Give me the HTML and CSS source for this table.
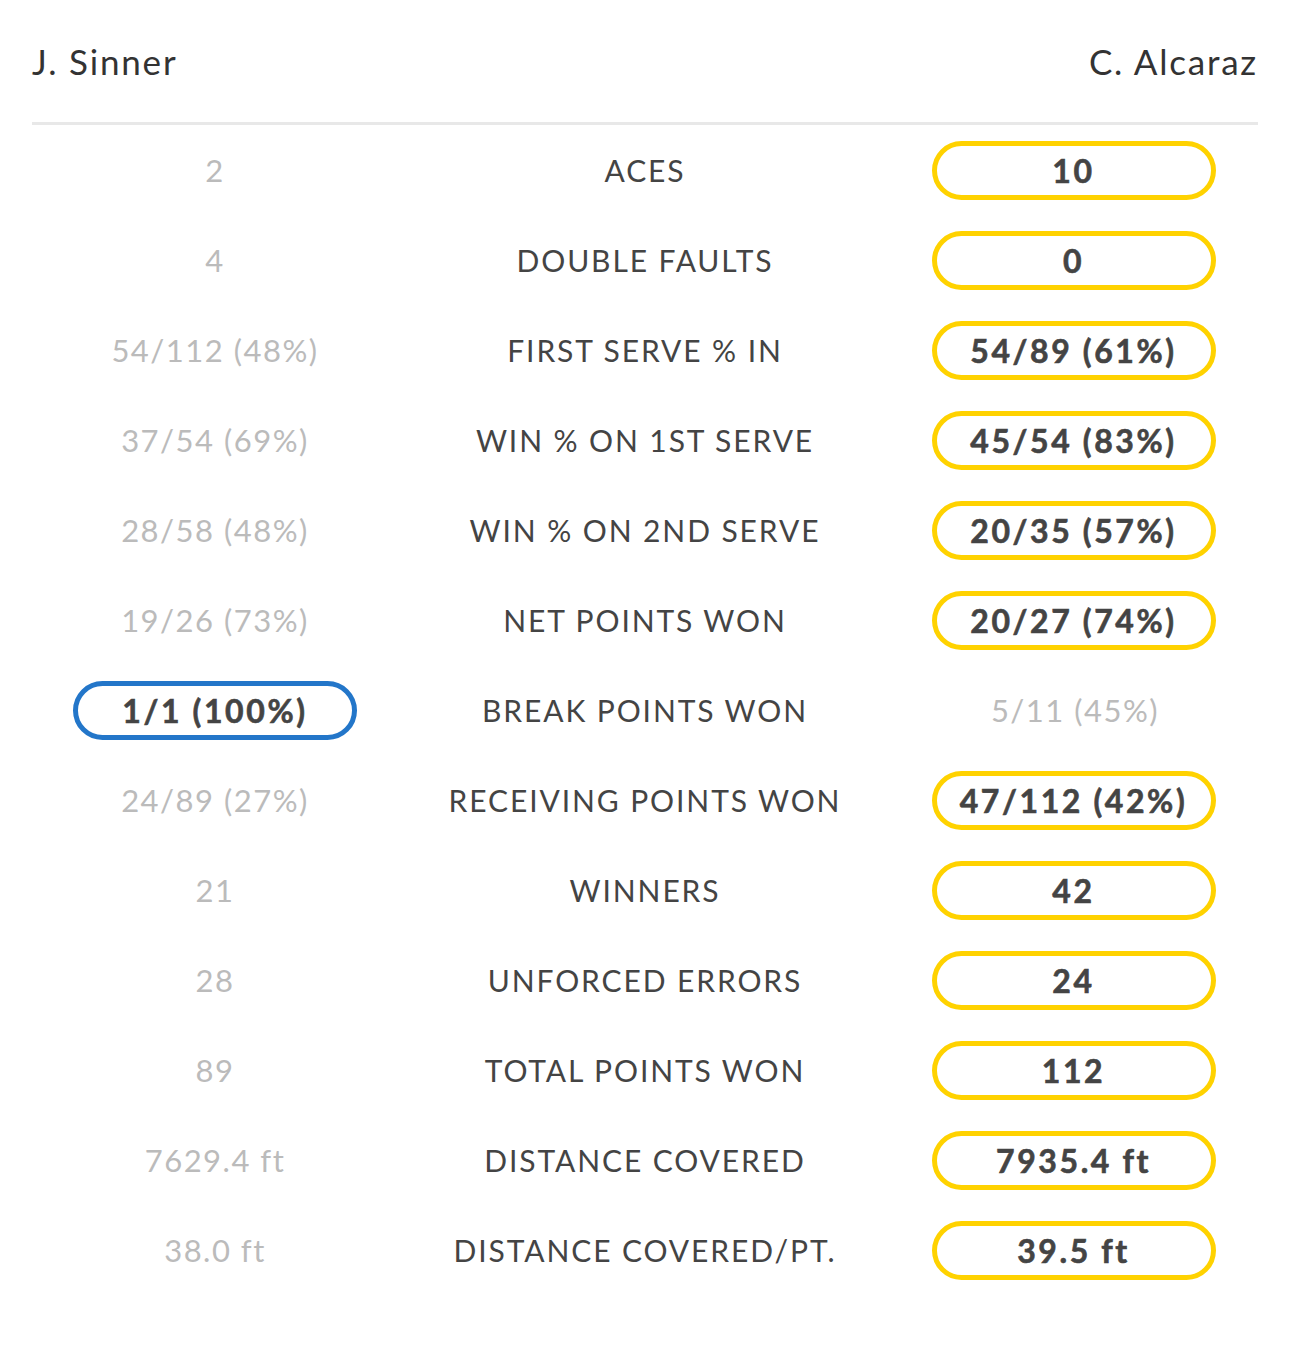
FILE: index.html
```html
<!DOCTYPE html>
<html>
<head>
<meta charset="utf-8">
<link rel="stylesheet" href="styles.css">
</head>
<body>
<div class="stats">
  <div class="header">
    <div class="name">J. Sinner</div>
    <div class="name">C. Alcaraz</div>
  </div>
  <div class="rows">
    <div class="row"><div class="val">2</div><div class="label">ACES</div><div class="val"><span class="pill win-y">10</span></div></div>
    <div class="row"><div class="val">4</div><div class="label">DOUBLE FAULTS</div><div class="val"><span class="pill win-y">0</span></div></div>
    <div class="row"><div class="val">54/112 (48%)</div><div class="label">FIRST SERVE % IN</div><div class="val"><span class="pill win-y">54/89 (61%)</span></div></div>
    <div class="row"><div class="val">37/54 (69%)</div><div class="label">WIN % ON 1ST SERVE</div><div class="val"><span class="pill win-y">45/54 (83%)</span></div></div>
    <div class="row"><div class="val">28/58 (48%)</div><div class="label">WIN % ON 2ND SERVE</div><div class="val"><span class="pill win-y">20/35 (57%)</span></div></div>
    <div class="row"><div class="val">19/26 (73%)</div><div class="label">NET POINTS WON</div><div class="val"><span class="pill win-y">20/27 (74%)</span></div></div>
    <div class="row"><div class="val"><span class="pill win-b">1/1 (100%)</span></div><div class="label">BREAK POINTS WON</div><div class="val">5/11 (45%)</div></div>
    <div class="row"><div class="val">24/89 (27%)</div><div class="label">RECEIVING POINTS WON</div><div class="val"><span class="pill win-y">47/112 (42%)</span></div></div>
    <div class="row"><div class="val">21</div><div class="label">WINNERS</div><div class="val"><span class="pill win-y">42</span></div></div>
    <div class="row"><div class="val">28</div><div class="label">UNFORCED ERRORS</div><div class="val"><span class="pill win-y">24</span></div></div>
    <div class="row"><div class="val">89</div><div class="label">TOTAL POINTS WON</div><div class="val"><span class="pill win-y">112</span></div></div>
    <div class="row"><div class="val">7629.4 ft</div><div class="label">DISTANCE COVERED</div><div class="val"><span class="pill win-y">7935.4 ft</span></div></div>
    <div class="row"><div class="val">38.0 ft</div><div class="label">DISTANCE COVERED/PT.</div><div class="val"><span class="pill win-y">39.5 ft</span></div></div>
  </div>
</div>
</body>
</html>
```
FILE: styles.css
```css
* { box-sizing: border-box; }
html, body { margin: 0; padding: 0; background: #fff; }
body { font-family: Lato, "Liberation Sans", sans-serif; color: #444; }
.stats { width: 1290px; }
.header {
  margin: 0 32px;
  height: 125px;
  display: flex;
  justify-content: space-between;
  align-items: center;
  border-bottom: 3px solid #e8e8e8;
}
.name { font-size: 35px; color: #333; letter-spacing: 1.8px; line-height: 1; }
.rows { display: flex; flex-direction: column; }
.row {
  display: grid;
  grid-template-columns: 430px 430px 430px;
  height: 90px;
  align-items: center;
}
.val {
  text-align: center;
  font-size: 31px;
  color: #bbb;
  letter-spacing: 1.5px;
  display: flex;
  justify-content: center;
  align-items: center;
}
.label {
  text-align: center;
  font-size: 30px;
  color: #444;
  letter-spacing: 1.9px;
}
.pill {
  display: flex;
  align-items: center;
  justify-content: center;
  width: 284px;
  height: 59px;
  border-radius: 30px;
  border: 5px solid #ffd200;
  color: #444;
  font-weight: 700;
  font-size: 32px;
  letter-spacing: 2.6px;
  -webkit-text-stroke: 0.6px #444;
}
.win-y { margin-left: -3px; }
.win-b { border-color: #2376c9; }
```
